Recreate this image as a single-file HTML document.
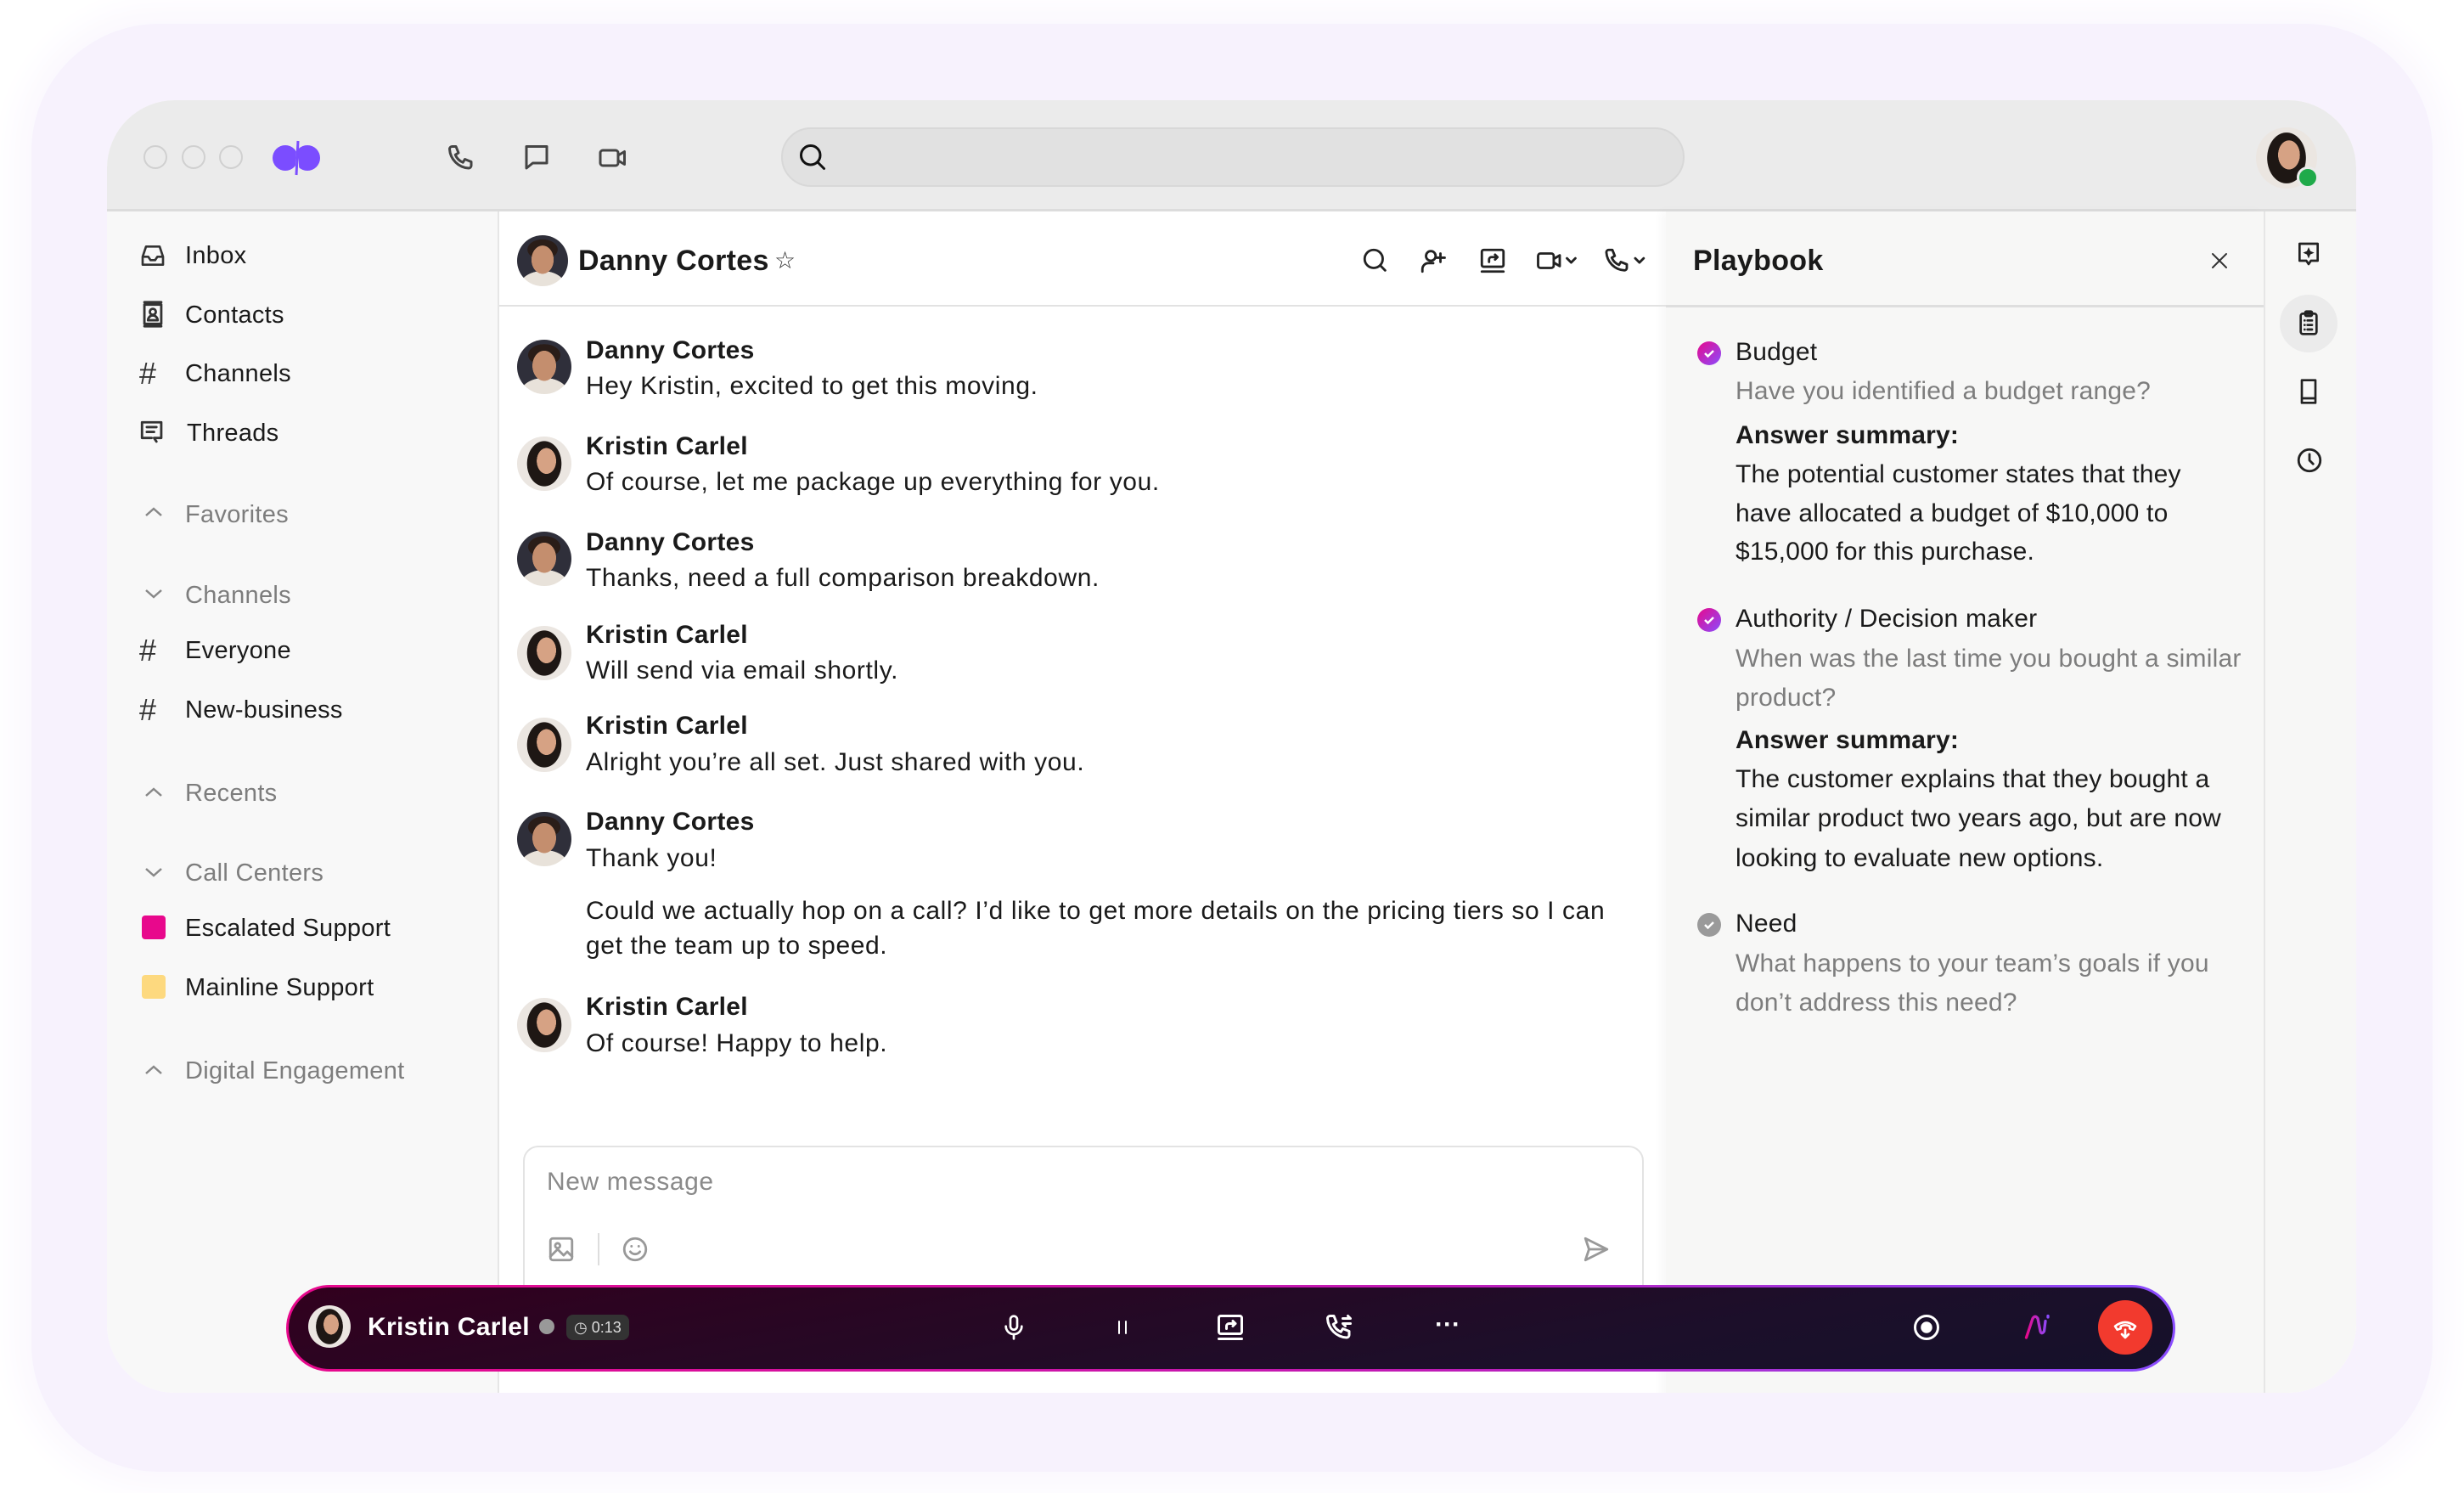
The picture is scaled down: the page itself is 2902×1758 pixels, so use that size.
<!DOCTYPE html>
<html><head><meta charset="utf-8"><style>
*{margin:0;padding:0;box-sizing:border-box}
body{width:2902px;height:1758px;background:#fff;position:relative;overflow:hidden;font-family:"Liberation Sans",sans-serif;color:#1a1a1a}
.a{position:absolute;white-space:nowrap;line-height:40px}
.t{font-size:30px;letter-spacing:0.6px}
.p{font-size:30px;letter-spacing:0.2px}
.b{font-weight:bold;font-size:30px;letter-spacing:0.3px}
.sb{font-size:29px;letter-spacing:0.3px}
.g{color:#7d7d7d}
.s{color:#8a8a8a}
svg{position:absolute;overflow:visible}
.ic{fill:none;stroke:#222;stroke-width:2;stroke-linecap:round;stroke-linejoin:round}
.w{fill:none;stroke:#fff;stroke-width:2;stroke-linecap:round;stroke-linejoin:round}
.av{position:absolute;border-radius:50%;overflow:hidden}
.dan{background:radial-gradient(ellipse 22% 28% at 50% 48%,#c48e6e 0 98%,transparent 100%),radial-gradient(ellipse 30% 20% at 50% 28%,#2a1d18 0 98%,transparent 100%),radial-gradient(ellipse 45% 30% at 50% 100%,#e8e2da 0 98%,transparent 100%),#2f2f3a;}
.kri{background:radial-gradient(ellipse 18% 24% at 54% 45%,#d6a284 0 98%,transparent 100%),radial-gradient(ellipse 32% 42% at 50% 50%,#1e1714 0 98%,transparent 100%),#ebe6e1;}
</style></head><body>
<div style="position:absolute;left:37px;top:28px;width:2828px;height:1705px;border-radius:150px;background:#f7f2fd;box-shadow:0 0 40px 20px #fbf8fe"></div>
<div style="position:absolute;left:126px;top:118px;width:2649px;height:1522px;border-radius:80px;overflow:hidden;background:#fff">
  <div style="position:absolute;left:0;top:0;width:2649px;height:131px;background:#ebebeb;border-bottom:3px solid #dcdcdc"></div>
  <div style="position:absolute;left:0;top:131px;width:462px;height:1400px;background:#f8f8f8;border-right:2px solid #e6e6e6"></div>
  <div style="position:absolute;left:1836px;top:131px;width:704px;height:1400px;background:#f7f7f6;box-shadow:-6px 0 10px rgba(0,0,0,0.03)"></div>
  <div style="position:absolute;left:2540px;top:131px;width:109px;height:1400px;background:#f7f7f6;border-left:2px solid #e6e6e6"></div>
  <div style="position:absolute;left:462px;top:241px;width:1374px;height:2px;background:#e2e2e2"></div>
  <div style="position:absolute;left:1836px;top:241px;width:704px;height:3px;background:#dedede"></div>
</div>
<div style="position:absolute;left:169px;top:171px;width:28px;height:28px;border:2px solid #d0d0d0;border-radius:50%"></div>
<div style="position:absolute;left:214px;top:171px;width:28px;height:28px;border:2px solid #d0d0d0;border-radius:50%"></div>
<div style="position:absolute;left:258px;top:171px;width:28px;height:28px;border:2px solid #d0d0d0;border-radius:50%"></div>
<svg style="left:320px;top:160px" width="60" height="52" viewBox="0 0 60 52"><circle cx="16" cy="26" r="15" fill="#7b4dff"/><circle cx="42" cy="26" r="15" fill="#7b4dff"/><path d="M30 2 L33 50 L27 50 Z" fill="#ebebeb"/><path d="M31 6 L29 46" stroke="#7b4dff" stroke-width="3"/></svg>
<svg style="left:525px;top:168px" width="36" height="36" viewBox="0 0 24 24"><path class="ic" d="M5 3h3l2 5-2.5 1.5a11 11 0 0 0 6 6L15 13l5 2v3a2 2 0 0 1-2 2A16 16 0 0 1 3 5a2 2 0 0 1 2-2z" style="stroke:#444"/></svg>
<svg style="left:614px;top:168px" width="36" height="36" viewBox="0 0 24 24"><path class="ic" d="M4 3h16v13H9l-5 4z" style="stroke:#444"/></svg>
<svg style="left:703px;top:168px" width="38" height="36" viewBox="0 0 24 24"><rect class="ic" x="2" y="6" width="14" height="12" rx="2" style="stroke:#444"/><path class="ic" d="M16 10l5-3v10l-5-3" style="stroke:#444"/></svg>
<div style="position:absolute;left:920px;top:150px;width:1064px;height:70px;border-radius:35px;background:#e1e1e1;border:2px solid #d8d8d8"></div>
<svg style="left:939px;top:167px" width="36" height="36" viewBox="0 0 24 24"><circle class="ic" cx="10.5" cy="10.5" r="7.5" style="stroke:#111"/><path class="ic" d="M16 16l5 5" style="stroke:#111"/></svg>
<div class="av kri" style="left:2657px;top:150px;width:72px;height:72px"></div>
<div style="position:absolute;left:2705px;top:196px;width:26px;height:26px;border-radius:50%;background:#1faa4a;border:3px solid #ebebeb"></div>

<svg style="left:163px;top:285px" width="34" height="32" viewBox="0 0 24 24"><path class="ic" d="M3 13l3-9h12l3 9v7H3z M3 13h5l2 3h4l2-3h5" style="stroke:#333"/></svg>
<div class="a sb" style="left:218px;top:281px">Inbox</div>
<svg style="left:163px;top:352px" width="34" height="36" viewBox="0 0 24 24"><path class="ic" d="M5 2h14M5 22h14M5 4h14v16H5z" style="stroke:#333"/><circle class="ic" cx="12" cy="10" r="2.5" style="stroke:#333"/><path class="ic" d="M8 17a4 4 0 0 1 8 0z" style="stroke:#333"/></svg>
<div class="a sb" style="left:218px;top:351px">Contacts</div>
<div class="a" style="left:164px;top:420px;font-size:36px;color:#333">#</div>
<div class="a sb" style="left:218px;top:420px">Channels</div>
<svg style="left:163px;top:492px" width="34" height="36" viewBox="0 0 24 24"><path class="ic" d="M3 3h16v13H13l2 3M3 3v13h8M7 7h8M7 11h6" style="stroke:#333"/></svg>
<div class="a sb" style="left:220px;top:490px">Threads</div>

<svg style="left:170px;top:596px" width="22" height="14" viewBox="0 0 22 14"><path d="M2 11l9-8 9 8" fill="none" stroke="#888" stroke-width="2.5"/></svg>
<div class="a sb g" style="left:218px;top:586px">Favorites</div>
<svg style="left:170px;top:692px" width="22" height="14" viewBox="0 0 22 14"><path d="M2 3l9 8 9-8" fill="none" stroke="#888" stroke-width="2.5"/></svg>
<div class="a sb g" style="left:218px;top:681px">Channels</div>
<div class="a" style="left:164px;top:746px;font-size:36px;color:#333">#</div>
<div class="a sb" style="left:218px;top:746px">Everyone</div>
<div class="a" style="left:164px;top:816px;font-size:36px;color:#333">#</div>
<div class="a sb" style="left:218px;top:816px">New-business</div>
<svg style="left:170px;top:926px" width="22" height="14" viewBox="0 0 22 14"><path d="M2 11l9-8 9 8" fill="none" stroke="#888" stroke-width="2.5"/></svg>
<div class="a sb g" style="left:218px;top:914px">Recents</div>
<svg style="left:170px;top:1020px" width="22" height="14" viewBox="0 0 22 14"><path d="M2 3l9 8 9-8" fill="none" stroke="#888" stroke-width="2.5"/></svg>
<div class="a sb g" style="left:218px;top:1008px">Call Centers</div>
<div style="position:absolute;left:167px;top:1078px;width:28px;height:28px;border-radius:4px;background:#e8088c"></div>
<div class="a sb" style="left:218px;top:1073px">Escalated Support</div>
<div style="position:absolute;left:167px;top:1148px;width:28px;height:28px;border-radius:4px;background:#fdd97f"></div>
<div class="a sb" style="left:218px;top:1143px">Mainline Support</div>
<svg style="left:170px;top:1253px" width="22" height="14" viewBox="0 0 22 14"><path d="M2 11l9-8 9 8" fill="none" stroke="#888" stroke-width="2.5"/></svg>
<div class="a sb g" style="left:218px;top:1241px">Digital Engagement</div>

<div class="av dan" style="left:609px;top:277px;width:60px;height:60px"></div>
<div class="a" style="left:681px;top:287px;font-size:34px;font-weight:bold;letter-spacing:0.3px">Danny Cortes</div>
<div class="a" style="left:912px;top:287px;font-size:28px;color:#333">☆</div>
<svg style="left:1603px;top:290px" width="34" height="34" viewBox="0 0 24 24"><circle class="ic" cx="10.5" cy="10.5" r="7.5"/><path class="ic" d="M16 16l4 4"/></svg>
<svg style="left:1671px;top:290px" width="34" height="34" viewBox="0 0 24 24"><circle class="ic" cx="10" cy="8" r="4"/><path class="ic" d="M3 21v-2a5 5 0 0 1 5-5h4M18 6v7M14.5 9.5h7"/></svg>
<svg style="left:1741px;top:290px" width="34" height="34" viewBox="0 0 24 24"><rect class="ic" x="3" y="3" width="18" height="14" rx="1.5"/><path class="ic" d="M3 21h18M9 13v-2a2 2 0 0 1 2-2h5M14 7l2 2-2 2"/></svg>
<svg style="left:1808px;top:290px" width="58" height="34" viewBox="0 0 40 24"><rect class="ic" x="2" y="6" width="13" height="12" rx="2"/><path class="ic" d="M15 10.5l5-3v9l-5-3M26 10l3.5 3.5L33 10"/></svg>
<svg style="left:1887px;top:290px" width="58" height="34" viewBox="0 0 40 24"><path class="ic" d="M5 3h3l2 5-2.5 1.5a11 11 0 0 0 6 6L15 13l5 2v3a2 2 0 0 1-2 2A16 16 0 0 1 3 5a2 2 0 0 1 2-2zM27 10l3.5 3.5L34 10"/></svg>

<div class="av dan" style="left:609px;top:400px;width:64px;height:64px"></div>
<div class="a b" style="left:690px;top:393px">Danny Cortes</div>
<div class="a t" style="left:690px;top:435px">Hey Kristin, excited to get this moving.</div>
<div class="av kri" style="left:609px;top:514px;width:64px;height:64px"></div>
<div class="a b" style="left:690px;top:506px">Kristin Carlel</div>
<div class="a t" style="left:690px;top:548px">Of course, let me package up everything for you.</div>
<div class="av dan" style="left:609px;top:626px;width:64px;height:64px"></div>
<div class="a b" style="left:690px;top:619px">Danny Cortes</div>
<div class="a t" style="left:690px;top:661px">Thanks, need a full comparison breakdown.</div>
<div class="av kri" style="left:609px;top:737px;width:64px;height:64px"></div>
<div class="a b" style="left:690px;top:728px">Kristin Carlel</div>
<div class="a t" style="left:690px;top:770px">Will send via email shortly.</div>
<div class="av kri" style="left:609px;top:845px;width:64px;height:64px"></div>
<div class="a b" style="left:690px;top:835px">Kristin Carlel</div>
<div class="a t" style="left:690px;top:878px">Alright you’re all set. Just shared with you.</div>
<div class="av dan" style="left:609px;top:956px;width:64px;height:64px"></div>
<div class="a b" style="left:690px;top:948px">Danny Cortes</div>
<div class="a t" style="left:690px;top:991px">Thank you!</div>
<div class="a t" style="left:690px;top:1053px">Could we actually hop on a call? I’d like to get more details on the pricing tiers so I can</div>
<div class="a t" style="left:690px;top:1094px">get the team up to speed.</div>
<div class="av kri" style="left:609px;top:1175px;width:64px;height:64px"></div>
<div class="a b" style="left:690px;top:1166px">Kristin Carlel</div>
<div class="a t" style="left:690px;top:1209px">Of course! Happy to help.</div>

<div style="position:absolute;left:616px;top:1349px;width:1320px;height:200px;border:2px solid #e3e3e3;border-radius:18px;background:#fff"></div>
<div class="a t s" style="left:644px;top:1372px">New message</div>
<svg style="left:644px;top:1454px" width="34" height="34" viewBox="0 0 24 24"><rect class="ic" x="3" y="3" width="18" height="18" rx="2" style="stroke:#999"/><circle class="ic" cx="9" cy="9" r="2" style="stroke:#999"/><path class="ic" d="M3 18l6-6 5 5 3-3 4 4" style="stroke:#999"/></svg>
<div style="position:absolute;left:704px;top:1452px;width:2px;height:38px;background:#ddd"></div>
<svg style="left:731px;top:1454px" width="34" height="34" viewBox="0 0 24 24"><circle class="ic" cx="12" cy="12" r="9" style="stroke:#999"/><path class="ic" d="M8 14a5 5 0 0 0 8 0M9 9.5h.01M15 9.5h.01" style="stroke:#999"/></svg>
<svg style="left:1862px;top:1454px" width="36" height="34" viewBox="0 0 24 24"><path class="ic" d="M3 3l18 9-18 9 3-9zM6 12h15" style="stroke:#999"/></svg>

<div class="a" style="left:1994px;top:287px;font-size:34px;font-weight:bold;letter-spacing:0.3px">Playbook</div>
<svg style="left:2602px;top:295px" width="24" height="24" viewBox="0 0 24 24"><path class="ic" d="M4 4l16 16M20 4L4 20" style="stroke:#333"/></svg>
<svg style="left:1998px;top:401px" width="30" height="30" viewBox="0 0 30 30"><defs><linearGradient id="pg" x1="0" y1="0" x2="1" y2="1"><stop offset="0" stop-color="#e8088c"/><stop offset="1" stop-color="#8a4dff"/></linearGradient></defs><circle cx="15" cy="15" r="14" fill="url(#pg)"/><path d="M10 15l3.5 3.5L20 12" fill="none" stroke="#fff" stroke-width="2.5"/></svg>
<div class="a p" style="left:2044px;top:395px">Budget</div>
<div class="a p g" style="left:2044px;top:441px">Have you identified a budget range?</div>
<div class="a p" style="left:2044px;top:493px;font-weight:bold">Answer summary:</div>
<div class="a p" style="left:2044px;top:539px">The potential customer states that they</div>
<div class="a p" style="left:2044px;top:585px">have allocated a budget of $10,000 to</div>
<div class="a p" style="left:2044px;top:630px">$15,000 for this purchase.</div>
<svg style="left:1998px;top:715px" width="30" height="30" viewBox="0 0 30 30"><circle cx="15" cy="15" r="14" fill="url(#pg)"/><path d="M10 15l3.5 3.5L20 12" fill="none" stroke="#fff" stroke-width="2.5"/></svg>
<div class="a p" style="left:2044px;top:709px">Authority / Decision maker</div>
<div class="a p g" style="left:2044px;top:756px">When was the last time you bought a similar</div>
<div class="a p g" style="left:2044px;top:802px">product?</div>
<div class="a p" style="left:2044px;top:852px;font-weight:bold">Answer summary:</div>
<div class="a p" style="left:2044px;top:898px">The customer explains that they bought a</div>
<div class="a p" style="left:2044px;top:944px">similar product two years ago, but are now</div>
<div class="a p" style="left:2044px;top:991px">looking to evaluate new options.</div>
<svg style="left:1998px;top:1074px" width="30" height="30" viewBox="0 0 30 30"><circle cx="15" cy="15" r="14" fill="#9a9a9a"/><path d="M10 15l3.5 3.5L20 12" fill="none" stroke="#fff" stroke-width="2.5"/></svg>
<div class="a p" style="left:2044px;top:1068px">Need</div>
<div class="a p g" style="left:2044px;top:1115px">What happens to your team’s goals if you</div>
<div class="a p g" style="left:2044px;top:1161px">don’t address this need?</div>

<svg style="left:2703px;top:282px" width="32" height="34" viewBox="0 0 24 24"><path class="ic" d="M4 3h16v15h-6l-2 3-2-3H4z"/><path d="M12 6l1.5 3.5L17 11l-3.5 1.5L12 16l-1.5-3.5L7 11l3.5-1.5z" fill="#222"/></svg>
<div style="position:absolute;left:2685px;top:347px;width:68px;height:68px;border-radius:50%;background:#ebebeb"></div>
<svg style="left:2703px;top:363px" width="32" height="34" viewBox="0 0 24 24"><rect class="ic" x="5" y="4" width="14" height="18" rx="2"/><rect class="ic" x="9" y="2" width="6" height="4" rx="1"/><path class="ic" d="M8.5 10h.01M11 10h4M8.5 14h.01M11 14h4M8.5 18h.01M11 18h4"/></svg>
<svg style="left:2703px;top:444px" width="32" height="34" viewBox="0 0 24 24"><path class="ic" d="M6 2h12v20H6zM6 18h12"/></svg>
<svg style="left:2703px;top:525px" width="34" height="34" viewBox="0 0 24 24"><circle class="ic" cx="12" cy="12" r="9"/><path class="ic" d="M12 7v5l3 3"/></svg>

<div style="position:absolute;left:337px;top:1513px;width:2225px;height:102px;border-radius:51px;background:linear-gradient(90deg,#e8088c,#c01ab5 60%,#8a4dff);padding:3px">
  <div style="width:100%;height:100%;border-radius:48px;background:linear-gradient(170deg,#32001e,#1c0f2a 70%,#15112a)"></div>
</div>
<div class="av kri" style="left:363px;top:1537px;width:50px;height:50px"></div>
<div class="a" style="left:433px;top:1543px;font-size:30px;font-weight:bold;color:#fff;letter-spacing:0.3px">Kristin Carlel</div>
<div style="position:absolute;left:635px;top:1553px;width:18px;height:18px;border-radius:50%;background:#999"></div>
<div style="position:absolute;left:667px;top:1548px;width:74px;height:30px;border-radius:8px;background:#333"></div>
<div class="a" style="left:676px;top:1543px;font-size:18px;color:#ddd">◷ 0:13</div>
<svg style="left:1178px;top:1545px" width="32" height="36" viewBox="0 0 24 24"><rect class="w" x="9" y="2" width="6" height="12" rx="3"/><path class="w" d="M5 11a7 7 0 0 0 14 0M12 18v4"/></svg>
<svg style="left:1310px;top:1549px" width="24" height="28" viewBox="0 0 24 24"><path class="w" d="M8 5v14M16 5v14"/></svg>
<svg style="left:1431px;top:1545px" width="36" height="36" viewBox="0 0 24 24"><rect class="w" x="3" y="3" width="18" height="14" rx="1.5"/><path class="w" d="M3 21h18M9 13v-2a2 2 0 0 1 2-2h5M14 7l2 2-2 2"/></svg>
<svg style="left:1559px;top:1545px" width="36" height="36" viewBox="0 0 24 24"><path class="w" d="M5 3h3l2 5-2.5 1.5a11 11 0 0 0 6 6L15 13l5 2v3a2 2 0 0 1-2 2A16 16 0 0 1 3 5a2 2 0 0 1 2-2zM15 5h6l-2-2M21 9h-6l2 2"/></svg>
<div class="a" style="left:1690px;top:1540px;font-size:30px;font-weight:bold;color:#fff">···</div>
<svg style="left:2251px;top:1545px" width="36" height="36" viewBox="0 0 24 24"><circle class="w" cx="12" cy="12" r="9"/><circle cx="12" cy="12" r="4.5" fill="#fff"/></svg>
<svg style="left:2381px;top:1545px" width="38" height="36" viewBox="0 0 24 24"><defs><linearGradient id="ag" x1="0" y1="0" x2="1" y2="0"><stop offset="0" stop-color="#e8088c"/><stop offset="1" stop-color="#8a4dff"/></linearGradient></defs><path d="M3 20L8 5q2-3 4 0l2 10q1 3 3 0l1-8M20 3v1" fill="none" stroke="url(#ag)" stroke-width="2.2" stroke-linecap="round"/></svg>
<div style="position:absolute;left:2471px;top:1531px;width:64px;height:64px;border-radius:50%;background:#f23a2e"></div>
<svg style="left:2487px;top:1547px" width="32" height="32" viewBox="0 0 24 24"><path class="w" d="M3 11q9-7 18 0l-2 3-3-1v-2a9 9 0 0 0-8 0v2l-3 1zM12 14v7M9 18l3 3 3-3"/></svg>
</body></html>
